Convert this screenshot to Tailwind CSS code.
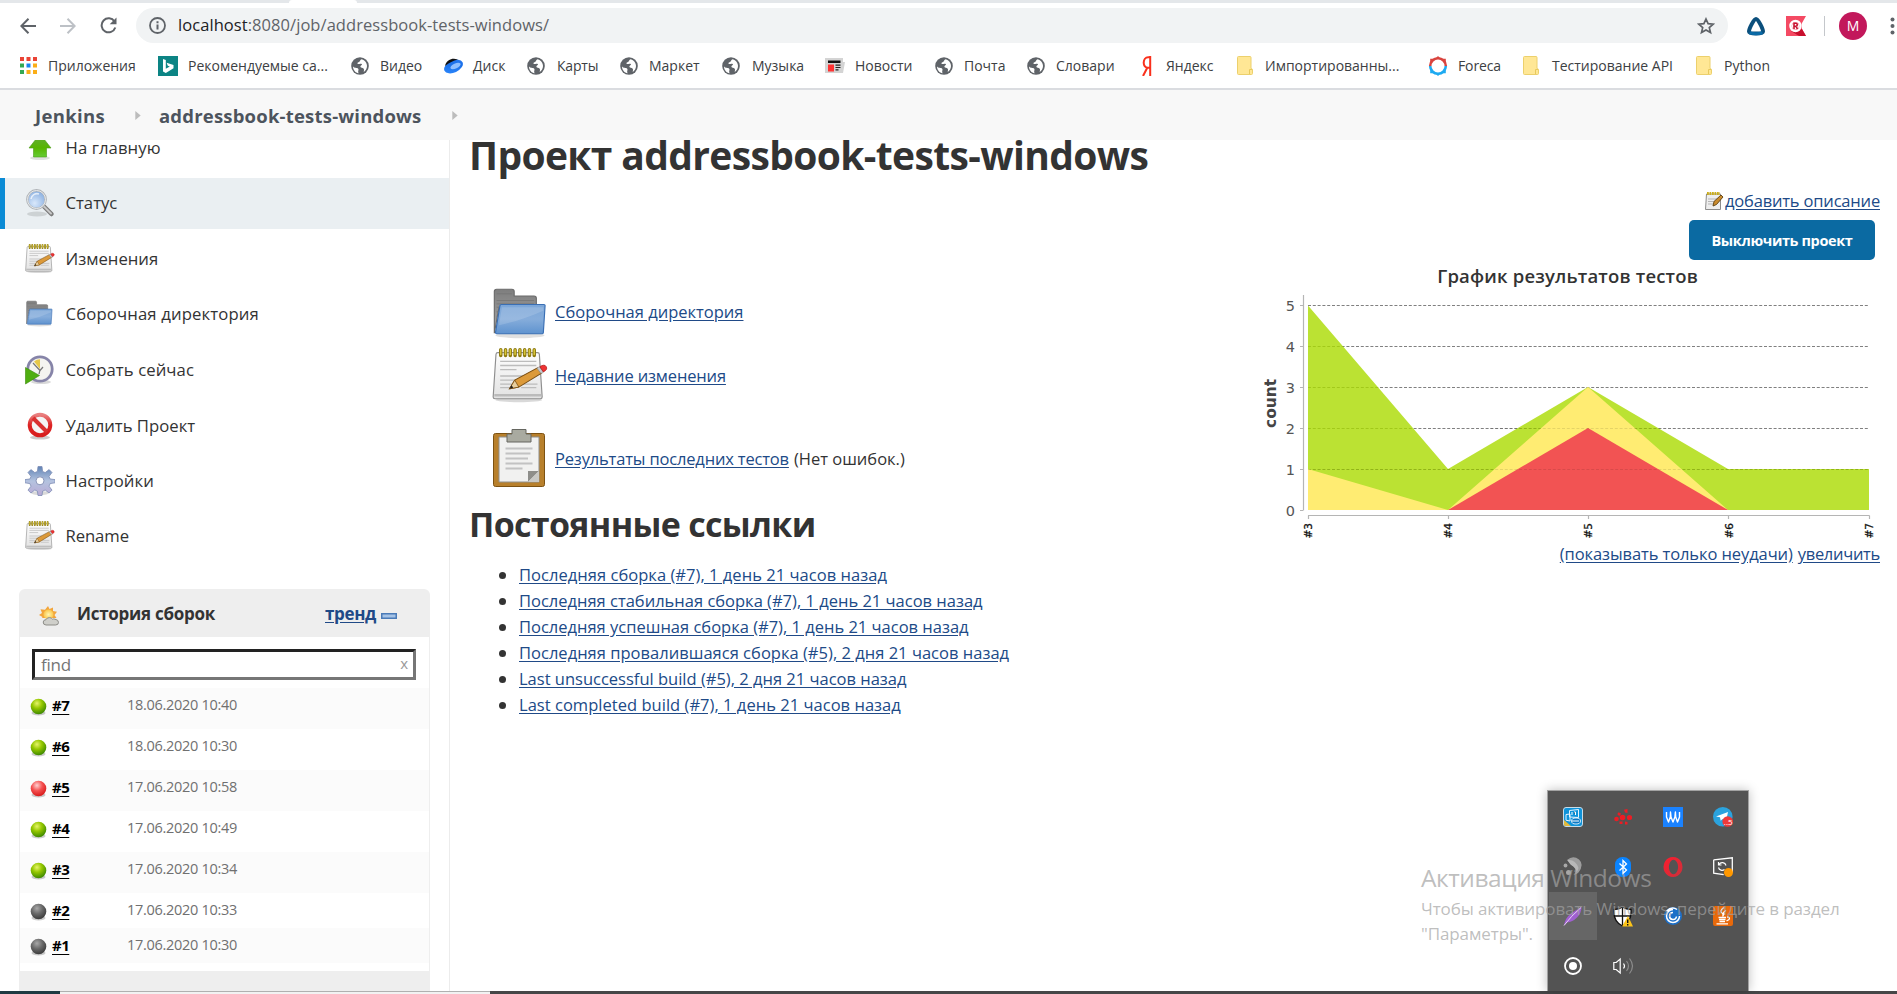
<!DOCTYPE html>
<html lang="ru">
<head>
<meta charset="utf-8">
<title>addressbook-tests-windows [Jenkins]</title>
<script src="https://cdn.jsdelivr.net/npm/@tailwindcss/browser@4"></script>
</head>
<body class="relative flex h-[994px] w-[1897px] flex-col overflow-hidden bg-white font-['Open_Sans','Noto_Sans',sans-serif] text-[16.5px] text-[#333]">

<svg width="0" height="0" class="absolute">
  <defs>
    <linearGradient id="gFolder" x1="0" y1="0" x2="0" y2="1"><stop offset="0" stop-color="#7ba6d8"/><stop offset=".5" stop-color="#86addb"/><stop offset="1" stop-color="#5f93cf"/></linearGradient>
    <linearGradient id="gGrey" x1="0" y1="0" x2="0" y2="1"><stop offset="0" stop-color="#7e7e7e"/><stop offset="1" stop-color="#a8a8a8"/></linearGradient>
    <linearGradient id="gPaper" x1="0" y1="0" x2="0" y2="1"><stop offset="0" stop-color="#fdfdfd"/><stop offset="1" stop-color="#e2e2e2"/></linearGradient>
    <linearGradient id="gGear" x1="0" y1="0" x2="0" y2="1"><stop offset="0" stop-color="#5f83b5"/><stop offset=".5" stop-color="#b4c3df"/><stop offset="1" stop-color="#b9a9d4"/></linearGradient>
    <linearGradient id="gRed" x1="0" y1="0" x2="0" y2="1"><stop offset="0" stop-color="#e98080"/><stop offset=".5" stop-color="#d22"/><stop offset="1" stop-color="#d81e1e"/></linearGradient>
    <linearGradient id="gUp" x1="0" y1="0" x2="0" y2="1"><stop offset="0" stop-color="#6a4"/><stop offset=".6" stop-color="#57b500"/><stop offset="1" stop-color="#6c3"/></linearGradient>
    <linearGradient id="gDisk" x1="0" y1="1" x2="1" y2="0"><stop offset="0" stop-color="#2f8bff"/><stop offset=".6" stop-color="#1a6fe8"/><stop offset="1" stop-color="#2a7cf5"/></linearGradient>
    <linearGradient id="gOpera" x1="0" y1="0" x2="1" y2="1"><stop offset="0" stop-color="#ff1b2d"/><stop offset="1" stop-color="#c9323c"/></linearGradient>
    <radialGradient id="gLens" cx=".4" cy=".7" r=".7"><stop offset="0" stop-color="#d9e8fb"/><stop offset="1" stop-color="#88aee0"/></radialGradient>
    <radialGradient id="gGreen" cx=".4" cy=".3" r=".7"><stop offset="0" stop-color="#e6f36a"/><stop offset=".45" stop-color="#96c800"/><stop offset="1" stop-color="#3f8a00"/></radialGradient>
    <radialGradient id="gBallRed" cx=".4" cy=".3" r=".7"><stop offset="0" stop-color="#ffd0d0"/><stop offset=".5" stop-color="#f45050"/><stop offset="1" stop-color="#d81c1c"/></radialGradient>
    <radialGradient id="gDark" cx=".4" cy=".3" r=".7"><stop offset="0" stop-color="#a8a8a8"/><stop offset=".5" stop-color="#6a6a6a"/><stop offset="1" stop-color="#3c3c3c"/></radialGradient>
    <radialGradient id="gSun" cx=".5" cy=".5" r=".5"><stop offset="0" stop-color="#fff6b0"/><stop offset="1" stop-color="#fbc64a"/></radialGradient>
  </defs>
  <symbol id="globe" viewBox="0 0 18 18"><circle cx="9" cy="9" r="8.800" fill="#5f6368"/><path d="M2 9.500c1.500 2 4 .8 5.200 2.200 1 1.200-.8 2.300.5 4.500C4.500 16 2 13 2 9.500zM6.500 6.200c0-1.200 2-1 2.300-2 .2-.8 1-1.600 2-2 3 .8 5.200 3.500 5.200 6.800 0 2.500-1.300 4.700-3.200 6-.2-1.300.9-2-.3-3.500-.8-1-2.600-.3-3-1.500-.5-1.300.8-1.500 1.400-2.300.4-.6-.4-1-1.400-1-1.500.2-3 .8-3-.5z" fill="#fff"/></symbol>
  <symbol id="bfolder" viewBox="0 0 16 19"><path d="M1.500.5h11.500q1 0 1 1V12.500l1.500.8V17.500q0 1-1 1H1.500q-1 0-1-1V1.500q0-1 1-1z" fill="#ffe795" stroke="#ecd06c"/><path d="M12.500 18V13.500h2.500" fill="none" stroke="#e8c95c"/></symbol>
  <symbol id="folder" viewBox="0 0 48 48"><ellipse cx="24" cy="43" rx="21" ry="2.500" fill="#000" opacity=".12"/><path d="M2 41V4q0-2 2-2h13q2 0 2 2v4h17q2 0 2 2V18H6z" fill="url(#gGrey)" stroke="#6b6b6b"/><path d="M4 6h13M4 12h32M4 15h32M4 18h3M4 22h3M4 26h3M4 30h2" stroke="#777" stroke-width=".8"/><path d="M8 15.500h36.500q1 0 1 1L44 40.500q-.2 1-1 1H4q-1 0-1-1L6.800 16.500q.2-1 1.200-1z" fill="url(#gFolder)" stroke="#3a6fb4"/><path d="M8.500 18L6 34Q24 30 44 21V18z" fill="#fff" opacity=".15"/></symbol>
  <symbol id="notepad" viewBox="0 0 48 48"><ellipse cx="23" cy="44.500" rx="20" ry="2" fill="#000" opacity=".15"/><path d="M5 4h34q1.500 0 1.600 1.500L43 42q0 1.500-1.500 1.500H2.500Q1 43.500 1 42L3.400 5.500Q3.500 4 5 4z" fill="url(#gPaper)" stroke="#8f8f8f"/><path d="M2 40.500h40" stroke="#bbb" stroke-width="2"/><path d="M7 11.500h31M7 15h31M7 18.500h14M7 24h20M7 27.500h14M7 31h10M7 34h9M27 31h12M25 34h13" stroke="#bcbcbc" stroke-width="1.200"/><path d="M7.500 1.500v5M11.600 1.500v5M15.700 1.500v5M19.800 1.500v5M23.900 1.500v5M28 1.500v5M32.100 1.500v5M36.200 1.500v5" stroke="#8d7a10" stroke-width="3" stroke-linecap="round"/><path d="M7.500 1.500v4M11.600 1.500v4M15.700 1.500v4M19.800 1.500v4M23.900 1.500v4M28 1.500v4M32.100 1.500v4M36.200 1.500v4" stroke="#d8c53a" stroke-width="1.300" stroke-linecap="round"/><path d="M15 35l4.500-7.500L39 17l3.500 4.500L23 33.500z" fill="#dc9a3a" stroke="#7a4d10" stroke-width=".9"/><path d="M15 35l4.500-7.500 3.500 6z" fill="#e8cf9f" stroke="#7a4d10" stroke-width=".7"/><path d="M15 35l1.800-3 1.400 2z" fill="#222"/><path d="M38.500 17.300l2.200-1.200 3.500 4.500-2.200 1.300z" fill="#c6cbd0" stroke="#888" stroke-width=".5"/><path d="M41 16q4-2.500 5.500 0 1.500 2.500-2.500 4.500z" fill="#e33" stroke="#a11" stroke-width=".6"/></symbol>
  <symbol id="tri" viewBox="0 0 6 10"><path d="M0 0l6 5-6 5z" fill="#bcbcbc"/></symbol>
</svg>

<!-- Browser chrome -->
<header class="flex h-[90px] shrink-0 flex-col border-b-2 border-[#dadce0] bg-white">
  <div class="flex h-[3px] bg-[#e4e7ea] pl-[289px]"><div class="h-[3px] w-[68px] rounded-t-sm bg-white"></div></div>
  <div class="flex h-[45px] items-center">
    <div class="flex w-[136px] items-center gap-[24px] pl-[20px]">
      <svg width="16" height="16" viewBox="0 0 16 16" fill="none" stroke="#5f6368" stroke-width="2"><path d="M16 8H1.500M8.500 .8L1.300 8l7.200 7.200"/></svg>
      <svg width="16" height="16" viewBox="0 0 16 16" fill="none" stroke="#bdc1c6" stroke-width="2"><path d="M0 8h14.500M7.500 .8L14.700 8l-7.200 7.200"/></svg>
      <svg width="17" height="17" viewBox="0 0 17 17"><path d="M14.500 4.500A7 7 0 1 0 15.300 10.500" fill="none" stroke="#5f6368" stroke-width="2"/><path d="M16.500 .5v6.800H9.700z" fill="#5f6368"/></svg>
    </div>
    <div class="flex h-[35px] w-[1592px] items-center rounded-full bg-[#f1f3f4] pl-[13px] pr-[13px]">
      <svg width="17" height="17" viewBox="0 0 17 17"><circle cx="8.500" cy="8.500" r="7.500" fill="none" stroke="#5f6368" stroke-width="1.800"/><path d="M8.500 7.500v5M8.500 4.200v2" stroke="#5f6368" stroke-width="2"/></svg>
      <div class="ml-[12px] flex-1 whitespace-nowrap tracking-[0.06px] text-[#5f6368]"><span class="text-[#202124]">localhost</span>:8080/job/addressbook-tests-windows/</div>
      <svg width="18" height="18" viewBox="0 0 18 18" fill="none" stroke="#5f6368" stroke-width="1.700"><path d="M9 2l2.100 4.700 5.100.5-3.900 3.400 1.200 5L9 12.900l-4.500 2.700 1.200-5L1.800 7.200l5.100-.5z"/></svg>
    </div>
    <div class="flex flex-1 items-center pl-[18px]">
      <svg width="20" height="20" viewBox="0 0 20 20"><path d="M10 3C8 3 3 12.500 3 15.500 3 18 17 18 17 15.500 17 12.500 12 3 10 3z" fill="#fff" stroke="#0b4f7c" stroke-width="4" stroke-linejoin="round"/><path d="M3.500 16.800q6.500 2 13 0" fill="none" stroke="#0a6aa6" stroke-width="3"/></svg>
      <svg class="ml-[20px]" width="20" height="20" viewBox="0 0 20 20"><path d="M0 0h20l-4 7v6l4 7H0z" fill="#f44a63"/><path d="M5 15l8 5h7l-4-7z" fill="#c8102e"/><circle cx="9.500" cy="10" r="5" fill="none" stroke="#fff" stroke-width="2.500"/><circle cx="9.500" cy="10" r="3.500" fill="#fff"/><path d="M8 13V7.300h1.800q1.500 0 1.500 1.400T9.800 10.200H8M9.800 10.200l1.700 2.800" fill="none" stroke="#c8102e" stroke-width="1.600"/></svg>
      <div class="ml-[18px] h-[20px] w-px bg-[#c4c7cb]"></div>
      <div class="ml-[14px] flex h-[28px] w-[28px] items-center justify-center rounded-full bg-[#c2185b] text-[14px] text-white">M</div>
      <svg class="ml-[23px] shrink-0" width="5" height="18" viewBox="0 0 5 18" fill="#5f6368"><circle cx="2.500" cy="2.500" r="2"/><circle cx="2.500" cy="9" r="2"/><circle cx="2.500" cy="15.500" r="2"/></svg>
    </div>
  </div>
  <nav class="flex h-[35px] items-center whitespace-nowrap pl-[18px] text-[14px] text-[#3c4043]">
    <a class="flex w-[140px] items-center"><span class="flex w-[30px] pl-[2px]"><svg width="17" height="17" viewBox="0 0 17 17"><path d="M0 0h4v4H0zM6.500 0h4v4h-4zM13 0h4v4h-4z" fill="#ea4335"/><path d="M0 6.500h4v4H0z" fill="#34a853"/><path d="M6.500 6.500h4v4h-4z" fill="#1a84f0"/><path d="M13 6.500h4v4h-4zM6.500 13h4v4h-4zM13 13h4v4h-4z" fill="#fbae17"/><path d="M0 13h4v4H0z" fill="#34a853"/></svg></span>Приложения</a>
    <a class="flex w-[192px] items-center"><span class="flex w-[30px]"><svg width="20" height="20" viewBox="0 0 20 20"><path d="M0 0h20v20H0z" fill="#0c8484"/><path d="M5 3l2.800 1v8.800l4-2.200-2-.9-1.200-3L15.500 9v3.200L7.800 17 5 15.400z" fill="#fff"/></svg></span>Рекомендуемые са...</a>
    <a class="flex w-[93px] items-center"><span class="flex w-[30px] pl-px"><svg width="18" height="18"><use href="#globe"/></svg></span>Видео</a>
    <a class="flex w-[84px] items-center"><span class="flex w-[30px]"><svg width="20" height="16" viewBox="0 0 20 16"><ellipse cx="10.500" cy="8.500" rx="10" ry="6" transform="rotate(-25 10.500 8.500)" fill="url(#gDisk)"/><path d="M2 8C3 3 8 .5 11 .8l4 .7Q8 3 2 8z" fill="#111"/><ellipse cx="12.500" cy="8" rx="5.500" ry="2.600" transform="rotate(-25 12.500 8)" fill="#8fbfff"/></svg></span>Диск</a>
    <a class="flex w-[92px] items-center"><span class="flex w-[30px]"><svg width="18" height="18"><use href="#globe"/></svg></span><span class="tracking-[-0.2px]">Карты</span></a>
    <a class="flex w-[103px] items-center"><span class="flex w-[30px] pl-px"><svg width="18" height="18"><use href="#globe"/></svg></span>Маркет</a>
    <a class="flex w-[103px] items-center"><span class="flex w-[30px]"><svg width="18" height="18"><use href="#globe"/></svg></span>Музыка</a>
    <a class="flex w-[109px] items-center"><span class="flex w-[30px]"><svg width="20" height="16" viewBox="0 0 20 16"><path d="M0 0h18v4h2l-2 11H0z" fill="#d4d4d4"/><path d="M3 2.500h12.500v2.500H3z" fill="#111"/><path d="M3 6.500h6v7H3z" fill="#f33"/><path d="M10.500 7.200h5M10.500 9.500h5M10.500 11.800h3" stroke="#222" stroke-width="1.200"/></svg></span>Новости</a>
    <a class="flex w-[92px] items-center"><span class="flex w-[30px] pl-px"><svg width="18" height="18"><use href="#globe"/></svg></span>Почта</a>
    <a class="flex w-[110px] items-center"><span class="flex w-[30px] pl-px"><svg width="18" height="18"><use href="#globe"/></svg></span>Словари</a>
    <a class="flex w-[99px] items-center"><span class="flex w-[30px] pl-[5px]"><svg width="11" height="20" viewBox="0 0 11 20"><path d="M9.200 0v20M9.200 1.200H7.200C1.500 1.200 1 11.800 7 11.800h2.200M6.300 11.800L2 20" fill="none" stroke="#f9301c" stroke-width="2"/></svg></span>Яндекс</a>
    <a class="flex w-[193px] items-center"><span class="flex w-[30px] pl-[2px]"><svg width="16" height="19"><use href="#bfolder"/></svg></span>Импортированны...</a>
    <a class="flex w-[94px] items-center"><span class="flex w-[30px]"><svg width="20" height="20" viewBox="0 0 20 20"><g fill="none" stroke-width="2.600"><path d="M2.200 10a7.800 7.800 0 0 1 15.600 0" stroke="#d9443f"/><path d="M2.200 10a7.800 7.800 0 0 0 15.600 0" stroke="#1eaaf1"/></g><path d="M10 0l2.500 2.500h-5zM2.200 2.800h4L2.200 6.500zM17.800 2.800v4l-4-4z" fill="#d9443f"/><path d="M10 20l2.500-2.500h-5zM2.200 17.200v-4l4 4zM17.800 17.200h-4l4-4z" fill="#1eaaf1"/></svg></span><span class="tracking-[-0.12px]">Foreca</span></a>
    <a class="flex w-[172px] items-center"><span class="flex w-[30px] pl-px"><svg width="16" height="19"><use href="#bfolder"/></svg></span>Тестирование API</a>
    <a class="flex items-center"><span class="flex w-[30px] pl-[2px]"><svg width="16" height="19"><use href="#bfolder"/></svg></span>Python</a>
  </nav>
</header>

<!-- Breadcrumbs -->
<div class="flex h-[50px] shrink-0 items-center bg-[#f8f8f8] pl-[35px] pt-px text-[18.500px] font-bold text-[#4d545d]">
  <span class="w-[100px] tracking-[0.35px]">Jenkins</span>
  <svg width="6" height="9"><use href="#tri"/></svg>
  <span class="ml-[18px] w-[293px] whitespace-nowrap tracking-[0.2px]">addressbook-tests-windows</span>
  <svg width="6" height="9"><use href="#tri"/></svg>
</div>

<div class="flex h-[851px] shrink-0 overflow-hidden">
  <!-- Side panel -->
  <aside class="w-[450px] shrink-0 border-r border-[#ececec]">
    <div class="-mt-[18px] flex flex-col gap-[4.500px] text-[16.700px] font-medium">
      <a class="flex h-[51px] items-center pl-[25px] pt-px"><span class="w-[40.500px]"><svg width="30" height="30" viewBox="0 0 30 30"><ellipse cx="15" cy="25" rx="10" ry="2" fill="#000" opacity=".12"/><path d="M15 1L26 15h-4.500V24H8.500V15H4z" fill="url(#gUp)" stroke="#4a9a1a" stroke-width=".6"/></svg></span><span class="tracking-[0.08px]">На главную</span></a>
      <a class="flex h-[51px] items-center border-l-[5px] border-[#0b8bd5] bg-[#eaeff2] pl-[20px]"><span class="w-[40.500px]"><svg width="30" height="30" viewBox="0 0 30 30"><ellipse cx="12" cy="26" rx="10" ry="2.500" fill="#000" opacity=".12"/><path d="M18 17.500l8.500 8.500" stroke="#7c7c7c" stroke-width="4.500" stroke-linecap="round"/><path d="M19 18.500l7 7" stroke="#c8c8c8" stroke-width="2" stroke-linecap="round"/><circle cx="11.500" cy="11.500" r="9.200" fill="url(#gLens)" stroke="#b0b4b8" stroke-width="2.400"/><circle cx="11.500" cy="11.500" r="9" fill="none" stroke="#e8eaec" stroke-width="1"/><path d="M6 11a6 6 0 0 1 8-5" stroke="#fff" stroke-width="1.600" fill="none" opacity=".7"/></svg></span>Статус</a>
      <a class="flex h-[51px] items-center pl-[25px] pt-px"><span class="w-[40.500px]"><svg width="30" height="30"><use href="#notepad"/></svg></span>Изменения</a>
      <a class="flex h-[51px] items-center pl-[25px]"><span class="w-[40.500px]"><svg width="29" height="28"><use href="#folder"/></svg></span><span class="tracking-[0.14px]">Сборочная директория</span></a>
      <a class="flex h-[51px] items-center pl-[25px] pt-px"><span class="w-[40.500px]"><svg width="30" height="30" viewBox="0 0 30 30"><ellipse cx="16" cy="27" rx="10" ry="2" fill="#000" opacity=".15"/><circle cx="15" cy="14" r="12.200" fill="#f4f4f0" stroke="#8684a8" stroke-width="2.800"/><path d="M15 14L9 6.500a9.500 9.500 0 0 1 6-2.200z" fill="#e6c84a"/><path d="M8 8l7 7.500 3-3.500M15 15l-1 4" stroke="#777" stroke-width="1.200" fill="none"/><path d="M.5 12.500L14.500 20.500.5 29z" fill="#4fae10" stroke="#3a8a0a" stroke-width=".6"/></svg></span><span class="tracking-[0.08px]">Собрать сейчас</span></a>
      <a class="flex h-[51px] items-center pl-[25px] pt-px"><span class="w-[40.500px]"><svg width="30" height="30" viewBox="0 0 30 30"><ellipse cx="15" cy="26.500" rx="10" ry="2" fill="#000" opacity=".2"/><circle cx="15" cy="14" r="10.300" fill="#f4f4f4" stroke="url(#gRed)" stroke-width="4"/><path d="M8 7l14 14" stroke="#d93030" stroke-width="4"/></svg></span>Удалить Проект</a>
      <a class="flex h-[51px] items-center pl-[25px]"><span class="w-[40.500px]"><svg width="30" height="30" viewBox="0 0 30 30"><ellipse cx="15" cy="27" rx="9" ry="2" fill="#000" opacity=".15"/><path d="M13 .5h4l.6 5 2.600 1.100 3.900-3 2.900 2.900-3 3.900 1.100 2.600 4.900.6v3.200l-4.900.8-1.100 2.600 3 3.900-2.900 2.900-3.900-3-2.600 1.100-.6 4.400h-4l-.6-4.400-2.600-1.100-3.900 3L3 24.100l3-3.900-1.100-2.600L0 16.800v-3.200l4.900-.6L6 10.400 3 6.500l2.900-2.900 3.900 3 2.600-1.100z" fill="url(#gGear)" stroke="#7d8db5" stroke-width=".8"/><circle cx="15" cy="14.800" r="4" fill="#fff" stroke="#8a95b8"/></svg></span><span class="tracking-[0.1px]">Настройки</span></a>
      <a class="flex h-[51px] items-center pl-[25px]"><span class="w-[40.500px]"><svg width="30" height="30"><use href="#notepad"/></svg></span><span class="tracking-[-0.1px]">Rename</span></a>
    </div>

    <section class="ml-[19px] mt-[27.500px] w-[411px]">
      <div class="flex h-[48px] items-center rounded-t-md bg-[#eee] pl-[20px] pt-px text-[17px] font-bold">
        <svg class="mt-[5px]" width="20" height="20" viewBox="0 0 20 20"><path d="M9 0l1.500 3L14 1.500 14 5l4 .8L15.500 9l2 3H3L3.500 11 0 9l3-2L1.500 3.200 6 3.800z" fill="#f2a53c"/><circle cx="9.500" cy="8.500" r="5" fill="url(#gSun)"/><path d="M7 19q-3-.2-2.800-3 .3-2.300 2.800-2.300Q8 11.500 10.500 11.600q2 0 3 1.600 1-.6 2.500 0 3.500.5 3.500 3.200 0 2.600-3 2.600z" fill="#cfcfca" stroke="#8d8d88"/></svg>
        <span class="ml-[18px] w-[248px] tracking-[-0.27px]">История сборок</span>
        <a class="w-[55.500px] tracking-[-0.35px] text-[#204a87] underline underline-offset-2">тренд</a>
        <svg class="mt-[4px]" width="16" height="6" viewBox="0 0 16 6"><path d="M.75.75h14.500v4.500H.75z" fill="#a5c3e6" stroke="#4a7bb8" stroke-width="1.500"/></svg>
      </div>
      <div class="h-[334px] border-x border-[#eee] pt-[12px]">
        <div class="ml-[12px] flex h-[31px] w-[384px] items-center justify-between border-[3px] border-b-[#767676] border-l-[#222] border-r-[#767676] border-t-[#222] pl-[6px] pr-[5px]">
          <span class="pt-px text-[17px] tracking-[-0.2px] text-[#757575]">find</span><span class="-mt-[3px] text-[15px] text-[#999]">x</span>
        </div>
        <div class="mt-[8px] flex flex-col text-[14.500px] tracking-[-0.29px] text-[#707070]">
          <div class="flex h-[41px] bg-[#fbfbfb] pl-[10px] pt-[6px]"><svg class="mt-[4px]" width="17" height="18" viewBox="0 0 17 18"><ellipse cx="8.500" cy="15" rx="7" ry="2.500" opacity=".2"/><circle cx="8.500" cy="8.500" r="7.800" fill="url(#gGreen)"/></svg><a class="ml-[5px] w-[75px] text-[15px] font-bold tracking-[-0.5px] text-black underline underline-offset-3">#7</a>18.06.2020 10:40</div>
          <div class="flex h-[41px] pl-[10px] pt-[6px]"><svg class="mt-[4px]" width="17" height="18" viewBox="0 0 17 18"><ellipse cx="8.500" cy="15" rx="7" ry="2.500" opacity=".2"/><circle cx="8.500" cy="8.500" r="7.800" fill="url(#gGreen)"/></svg><a class="ml-[5px] w-[75px] text-[15px] font-bold tracking-[-0.5px] text-black underline underline-offset-3">#6</a>18.06.2020 10:30</div>
          <div class="flex h-[41px] bg-[#fbfbfb] pl-[10px] pt-[6px]"><svg class="mt-[4px]" width="17" height="18" viewBox="0 0 17 18"><ellipse cx="8.500" cy="15" rx="7" ry="2.500" opacity=".2"/><circle cx="8.500" cy="8.500" r="7.800" fill="url(#gBallRed)"/></svg><a class="ml-[5px] w-[75px] text-[15px] font-bold tracking-[-0.5px] text-black underline underline-offset-3">#5</a>17.06.2020 10:58</div>
          <div class="flex h-[41px] pl-[10px] pt-[6px]"><svg class="mt-[4px]" width="17" height="18" viewBox="0 0 17 18"><ellipse cx="8.500" cy="15" rx="7" ry="2.500" opacity=".2"/><circle cx="8.500" cy="8.500" r="7.800" fill="url(#gGreen)"/></svg><a class="ml-[5px] w-[75px] text-[15px] font-bold tracking-[-0.5px] text-black underline underline-offset-3">#4</a>17.06.2020 10:49</div>
          <div class="flex h-[41px] bg-[#fbfbfb] pl-[10px] pt-[6px]"><svg class="mt-[4px]" width="17" height="18" viewBox="0 0 17 18"><ellipse cx="8.500" cy="15" rx="7" ry="2.500" opacity=".2"/><circle cx="8.500" cy="8.500" r="7.800" fill="url(#gGreen)"/></svg><a class="ml-[5px] w-[75px] text-[15px] font-bold tracking-[-0.5px] text-black underline underline-offset-3">#3</a>17.06.2020 10:34</div>
          <div class="flex h-[35px] pl-[10px] pt-[6px]"><svg class="mt-[4px]" width="17" height="18" viewBox="0 0 17 18"><ellipse cx="8.500" cy="15" rx="7" ry="2.500" opacity=".2"/><circle cx="8.500" cy="8.500" r="7.800" fill="url(#gDark)"/></svg><a class="ml-[5px] w-[75px] text-[15px] font-bold tracking-[-0.5px] text-black underline underline-offset-3">#2</a>17.06.2020 10:33</div>
          <div class="flex h-[35px] bg-[#fbfbfb] pl-[10px] pt-[6px]"><svg class="mt-[4px]" width="17" height="18" viewBox="0 0 17 18"><ellipse cx="8.500" cy="15" rx="7" ry="2.500" opacity=".2"/><circle cx="8.500" cy="8.500" r="7.800" fill="url(#gDark)"/></svg><a class="ml-[5px] w-[75px] text-[15px] font-bold tracking-[-0.5px] text-black underline underline-offset-3">#1</a>17.06.2020 10:30</div>
        </div>
      </div>
      <div class="flex h-[40px] gap-[32px] bg-[#eee] pl-[37px] pt-[15px] text-[15px] text-[#204a87]"><span class="w-[151px] whitespace-nowrap">Atom feed для всех</span><span class="whitespace-nowrap">Atom feed для неудачных</span></div>
    </section>
  </aside>

  <!-- Main panel -->
  <main class="flex flex-1 justify-between">
    <div class="w-[720px] pl-[19px]">
      <h1 class="-mt-[12px] whitespace-nowrap text-[39px] font-bold leading-[54px] tracking-[-0.64px]">Проект addressbook-tests-windows</h1>
      <div class="mt-[98px] flex flex-col pl-[23px]">
        <div class="flex h-[64px] items-center"><svg class="mr-[7px] mt-[3px]" width="56" height="54" viewBox="0 0 48 48" preserveAspectRatio="none"><use href="#folder"/></svg><a class="text-[#204a87] underline underline-offset-2">Сборочная директория</a></div>
        <div class="flex h-[64px] items-center"><svg class="mr-[7px]" width="56" height="56" viewBox="0 0 48 48"><use href="#notepad"/></svg><a class="tracking-[-0.15px] text-[#204a87] underline underline-offset-2">Недавние изменения</a></div>
        <div class="mt-[18px] flex h-[66px] items-center"><svg class="-mt-[3px] mr-[7px]" width="56" height="60" viewBox="0 0 56 60"><rect x="1.500" y="5.500" width="51" height="53" rx="2" fill="#b8802c" stroke="#7d5212"/><path d="M7 9h40v45H7z" fill="#f1f1f0" stroke="#8f8f8c"/><path d="M13.500 20.500h27M13.500 25.500h25M13.500 30.500h22.500M13.500 35.500h27M13.500 40.500h17" stroke="#c2c2c2" stroke-width="2.200"/><path d="M47 43l-11 11V43z" fill="#8e8e8a"/><path d="M36 54l11-11v11z" fill="#c9c9c6"/><path d="M20 1.500h14v4.500h5v8H15V6h5z" fill="#a9aaa0" stroke="#666760"/></svg><a class="tracking-[-0.17px] text-[#204a87] underline underline-offset-2">Результаты последних тестов</a><span class="ml-[5px]">(Нет ошибок.)</span></div>
      </div>
      <h2 class="mt-[7px] whitespace-nowrap text-[34px] font-bold leading-[50px] tracking-[-0.68px]">Постоянные ссылки</h2>
      <ul class="mt-[13px] flex flex-col pl-[30px] text-[#204a87]">
        <li class="flex h-[26px] items-center gap-[13px]"><i class="size-[7px] rounded-full bg-[#333]"></i><a class="tracking-[0.04px] underline underline-offset-2">Последняя сборка (#7), 1 день 21 часов назад</a></li>
        <li class="flex h-[26px] items-center gap-[13px]"><i class="size-[7px] rounded-full bg-[#333]"></i><a class="underline underline-offset-2">Последняя стабильная сборка (#7), 1 день 21 часов назад</a></li>
        <li class="flex h-[26px] items-center gap-[13px]"><i class="size-[7px] rounded-full bg-[#333]"></i><a class="underline underline-offset-2">Последняя успешная сборка (#7), 1 день 21 часов назад</a></li>
        <li class="flex h-[26px] items-center gap-[13px]"><i class="size-[7px] rounded-full bg-[#333]"></i><a class="tracking-[0.02px] underline underline-offset-2">Последняя провалившаяся сборка (#5), 2 дня 21 часов назад</a></li>
        <li class="flex h-[26px] items-center gap-[13px]"><i class="size-[7px] rounded-full bg-[#333]"></i><a class="underline underline-offset-2">Last unsuccessful build (#5), 2 дня 21 часов назад</a></li>
        <li class="flex h-[26px] items-center gap-[13px]"><i class="size-[7px] rounded-full bg-[#333]"></i><a class="tracking-[0.03px] underline underline-offset-2">Last completed build (#7), 1 день 21 часов назад</a></li>
      </ul>
    </div>

    <div class="flex w-[640px] flex-col items-end pr-[17px] pt-[48px]">
      <div class="flex h-[26px] items-center"><svg class="mr-px" width="19" height="20" viewBox="0 0 19 20"><path d="M1.500 3h14v15.500h-15z" fill="#eee" stroke="#8c8c8c"/><path d="M3 8h9M3 10.500h7M3 13h5" stroke="#b5b5b5"/><path d="M2 2.500h13" stroke="#c9ac1a" stroke-width="3" stroke-dasharray="1.800 .7"/><path d="M8 15l1-4.500 7-6.500 2 2-6.500 7.500z" fill="#c98a2c" stroke="#5d4010" stroke-width=".9"/></svg><a class="tracking-[-0.18px] text-[#204a87] underline underline-offset-2">добавить описание</a></div>
      <button class="mr-[5px] mt-[6px] flex h-[40px] w-[186px] items-center justify-center rounded-[5px] bg-[#0b6aa2] pt-px text-[14.500px] font-bold tracking-[-0.37px] text-white">Выключить проект</button>
      <div class="mr-[182px] mt-[3px] flex h-[26px] items-center text-[18.500px] font-semibold tracking-[0.17px]">График результатов тестов</div>
      <svg class="mt-[2px] font-['DejaVu_Sans']" width="625" height="250" viewBox="1255 291 625 250">
        <g stroke="#808080" stroke-width="1.200" stroke-dasharray="3 1.800"><path d="M1308 305.500h561M1308 346.500h561M1308 387.500h561M1308 428.500h561M1308 469.500h561"/></g>
        <path d="M1308 305.500L1448 469 1588 387 1728 469H1869V510H1308z" fill="#aadb00" fill-opacity=".8"/>
        <path d="M1308 469L1448 510 1588 387 1728 510H1308z" fill="#ffec72"/>
        <path d="M1448 510L1588 428 1728 510z" fill="#f25353"/>
        <path d="M1308 469.500h561M1490 428.500h170" stroke="#000" stroke-opacity=".1" stroke-dasharray="3 1.800"/>
        <path d="M1303.500 295v215.500M1300 305.500h3M1300 346.500h3M1300 387.500h3M1300 428.500h3M1300 469.500h3M1300 510.500h3M1308 515.500h561.500M1308.500 515.500v3.500M1448.500 515.500v3.500M1588.500 515.500v3.500M1728.500 515.500v3.500M1869.500 515.500v3.500" stroke="#b5b5b5" stroke-width="1.200" fill="none"/>
        <g font-size="14.500" fill="#555" text-anchor="end"><text x="1295" y="311">5</text><text x="1295" y="352">4</text><text x="1295" y="393">3</text><text x="1295" y="434">2</text><text x="1295" y="475">1</text><text x="1295" y="516">0</text></g>
        <text transform="translate(1276 403.500) rotate(-90)" text-anchor="middle" font-size="15" font-weight="bold" fill="#444" textLength="49" lengthAdjust="spacingAndGlyphs">count</text>
        <g font-size="10.500" fill="#111" stroke="#111" stroke-width=".3"><text transform="translate(1312 538.500) rotate(-90)">#3</text><text transform="translate(1452 538.500) rotate(-90)">#4</text><text transform="translate(1592 538.500) rotate(-90)">#5</text><text transform="translate(1733 538.500) rotate(-90)">#6</text><text transform="translate(1873 538.500) rotate(-90)">#7</text></g>
      </svg>
      <div class="flex h-[26px] items-center gap-[5px] text-[#204a87]"><a class="tracking-[-0.09px] underline underline-offset-2">(показывать только неудачи)</a><a class="tracking-[-0.3px] underline underline-offset-2">увеличить</a></div>
    </div>
  </main>
</div>

<!-- Taskbar edge -->
<div class="flex h-[3px] shrink-0 bg-[#464748]"><div class="h-[3px] w-[60px] bg-[#1f3a42]"></div><div class="h-[3px] w-[430px] border-t border-[#b0b0b0] bg-[#f2f2f2]"></div></div>

<!-- Notification-area popup -->
<div class="absolute left-[1547px] top-[790px] grid h-[201px] w-[202px] grid-cols-4 grid-rows-4 border border-b-0 border-[#a2a2a2] bg-[#535353] pt-px shadow-[0_0_10px_rgba(0,0,0,0.25)]">
  <div class="flex items-center justify-center"><svg width="20" height="20" viewBox="0 0 20 20"><rect x=".5" y=".5" width="19" height="19" rx="2.500" fill="#0f93da" stroke="#c8dce8"/><path d="M1 13l7 6H2.500Q1 19 1 17.500z" fill="#e3b93c"/><path d="M6.500 3.500l9-1v8l-9-.5zM3 7.500l4-.5v7l-4-.8z" fill="none" stroke="#e3f4ff"/><ellipse cx="13" cy="14" rx="4.500" ry="3" fill="#0b78c4" stroke="#fff" stroke-width=".8"/><path d="M9 5v3M11 5h1.500v3M9 14h7" stroke="#fff"/></svg></div>
  <div class="flex items-center justify-center"><svg width="18" height="16" viewBox="0 0 18 16" fill="#ed1c24"><circle cx="8.500" cy="8.500" r="2.800"/><circle cx="15.500" cy="8.500" r="2.600"/><path d="M4 3.500l3 1-1.500 2.500zM10 .8l3.500-.8v4l-2.500-.5zM5.500 12.500h3v2.500h-3zM11 12.500l2.500.5v2.500H11z"/><circle cx="2.500" cy="10" r="2.300"/><circle cx="5" cy="5" r="1.500"/></svg></div>
  <div class="flex items-center justify-center"><svg width="20" height="20" viewBox="0 0 20 20"><path d="M0 0h20v20H0z" fill="#1a82ff"/><path d="M3.500 5v5l2 5L7.300 10 7.500 5l.5 5 2 5 1.900-5 .5-5 .3 5 1.800 5 2-5V5" fill="none" stroke="#fff" stroke-width="1.400" stroke-linejoin="round"/></svg></div>
  <div class="flex items-center justify-center"><svg width="20" height="20" viewBox="0 0 20 20"><circle cx="9.800" cy="9.800" r="9.800" fill="#2ba3de"/><path d="M3 9.500l12-4.500-2 9.500-3.500-2.500-1.800 1.800-.7-3.500z" fill="#fff"/><circle cx="14.700" cy="14.500" r="5.300" fill="#ee3a3a"/><text x="10.800" y="17.500" font-size="8" fill="#fff">..5</text></svg></div>

  <div class="flex items-center justify-center"><svg width="20" height="20" viewBox="0 0 20 20"><path d="M4 3Q10-2 16 2.500q5.500 5-.5 13-2 2.500-5 2 3.500-2.500 1.500-6Q9.500 8.500 4 3z" fill="#9d9d9d"/><path d="M4.500 3q8-1 11 8-1 4-3 5.500 1.500-4-2-7Q7 8 4.500 3z" fill="#b8b8b8"/><circle cx="2.500" cy="8.500" r="1.900" fill="#a8a8a8"/><circle cx="5.500" cy="15.500" r="2.500" fill="#a8a8a8"/></svg></div>
  <div class="flex items-center justify-center"><svg width="16" height="20" viewBox="0 0 16 20"><rect width="16" height="20" rx="7.500" fill="#0a84ff"/><path d="M4.500 6.500l7 6.500-3.500 3.500V3.500L11.500 7l-7 6.500" fill="none" stroke="#fff" stroke-width="1.300"/></svg></div>
  <div class="flex items-center justify-center"><svg width="20" height="20" viewBox="0 0 20 20"><path d="M10 0a9.500 10 0 1 0 .01 0zM10.500 2.800a4.600 7.200 0 1 1-.01 0z" fill="url(#gOpera)" fill-rule="evenodd"/></svg></div>
  <div class="flex items-center justify-center"><svg width="20" height="20" viewBox="0 0 20 20"><path d="M.7 2.800L19.300.8v15M.7 2.800v13.400l10 1.500" fill="none" stroke="#fff" stroke-width="1.300"/><path d="M13 8.500a3.800 3.800 0 0 0-7-1M5.500 5v3h3M5.500 10.500a3.800 3.800 0 0 0 6 2" fill="none" stroke="#fff" stroke-width="1.200"/><circle cx="15.500" cy="15.500" r="4.500" fill="#ff9800"/></svg></div>

  <div class="flex items-center"><div class="ml-px flex h-[48px] w-[48px] items-center justify-center bg-[#666]"><svg width="20" height="20" viewBox="0 0 20 20"><path d="M1 19.500Q2 12 8 7.500 13 4 18.500 1q0 6-4.500 10.500T4 16.500z" fill="#a05fd0"/><path d="M1 19.500Q8 10 18 1.500" stroke="#e6d0f5" fill="none"/></svg></div></div>
  <div class="flex items-center justify-center"><svg width="20" height="21" viewBox="0 0 20 21"><path d="M9.500 1q3.500 2.500 8.500 2.500 1 12-8.500 16.500Q0 15.500 1 3.500 6 3.500 9.500 1z" fill="#fff" stroke="#111" stroke-width="1.300"/><path d="M9.500 1v19M1 10h17" stroke="#111" stroke-width="1.300"/><path d="M15 10l5 10.500H9z" fill="#fcc419"/><path d="M14.700 13.500v3.500M14.700 18v1.500" stroke="#111" stroke-width="1.400"/></svg></div>
  <div class="flex items-center justify-center"><svg width="20" height="20" viewBox="0 0 20 20"><circle cx="10" cy="10" r="9" fill="#1c6fc8"/><path d="M3.500 5Q9 0 14 3.500M16.500 10a6.500 6.500 0 1 1-6.500-6.500M13.500 10.500a3.500 3.500 0 1 1-3.500-4" fill="none" stroke="#fff" stroke-width="1.500"/></svg></div>
  <div class="flex items-center justify-center"><svg width="20" height="20" viewBox="0 0 20 20"><rect width="20" height="20" rx="2" fill="#e8690b"/><path d="M11 1.500Q6 5 9.500 7.500 11 9 9.500 10.500M13 4.500q-4 2-1.500 4" fill="none" stroke="#fff" stroke-width="1.300"/><path d="M5.500 11.500h7.500M6 13.500h6.500M6.500 15.500h5.500M3.500 17.800h11.500M14 11q3.500 0 2 2.500l-2.500 1.500" fill="none" stroke="#fff" stroke-width="1.300"/></svg></div>

  <div class="flex items-center justify-center"><svg width="18" height="18" viewBox="0 0 18 18"><circle cx="9" cy="9" r="8" fill="none" stroke="#fff" stroke-width="1.800"/><circle cx="9" cy="9" r="4" fill="#fff"/></svg></div>
  <div class="flex items-center justify-center"><svg width="21" height="18" viewBox="0 0 21 18" fill="none" stroke="#fff" stroke-width="1.200"><path d="M.8 5.500v7h2.400l4 3.500V2l-4 3.500z"/><path d="M10.500 6.500q2 2.500 0 5"/><g stroke="#8c8c8c"><path d="M13.500 4q4 5 0 10M16.500 1.500q6 7.500 0 15"/></g></svg></div>
</div>

<!-- Windows activation watermark -->
<div class="absolute left-[1421px] top-[860px] whitespace-nowrap text-[#a2a2a2]/70">
  <div class="text-[24.500px] leading-[36px] tracking-[-0.45px]">Активация Windows</div>
  <div class="text-[17px] leading-[25px] tracking-[-0.1px]">Чтобы активировать Windows, перейдите в раздел<br>"Параметры".</div>
</div>
</body>
</html>
